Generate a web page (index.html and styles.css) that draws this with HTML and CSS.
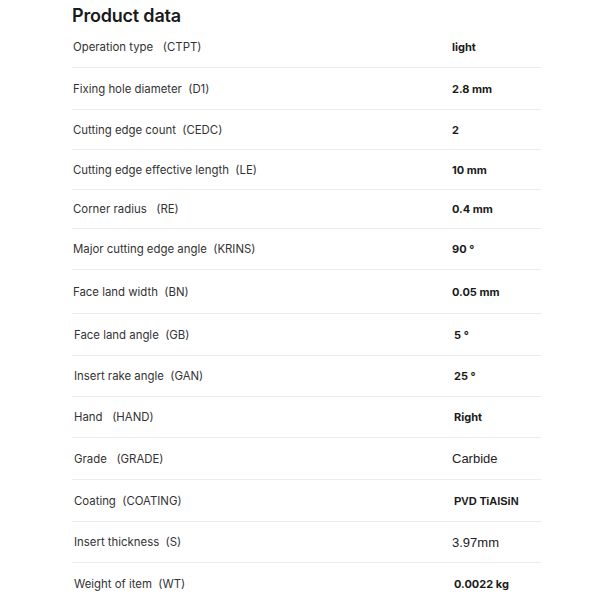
FILE: index.html
```html
<!DOCTYPE html>
<html lang="en">
<head>
    <meta charset="UTF-8">
    <meta name="viewport" content="width=device-width, initial-scale=1.0">
    <title>Product data</title>
    <link rel="stylesheet" href="styles.css">
</head>
<body>
    <div class="product-data">
        <h2 class="title">Product data</h2>

        <!-- 產品參數列表 -->
        <div class="row">
            <span class="label">Operation type   (CTPT)</span>
            <span class="value">light</span>
        </div>
        <div class="row row-long">
            <span class="label">Fixing hole diameter  (D1)</span>
            <span class="value">2.8 mm</span>
        </div>
        <div class="row row-short">
            <span class="label">Cutting edge count  (CEDC)</span>
            <span class="value">2</span>
        </div>
        <div class="row row-short">
            <span class="label">Cutting edge effective length  (LE)</span>
            <span class="value">10 mm</span>
        </div>
        <div class="row row-shorter">
            <span class="label">Corner radius   (RE)</span>
            <span class="value">0.4 mm</span>
        </div>
        <div class="row">
            <span class="label">Major cutting edge angle  (KRINS)</span>
            <span class="value">90 °</span>
        </div>
        <div class="row row-tall">
            <span class="label">Face land width  (BN)</span>
            <span class="value">0.05 mm</span>
        </div>
        <div class="row row-long">
            <span class="label shifted">Face land angle  (GB)</span>
            <span class="value shifted">5 °</span>
        </div>
        <div class="row">
            <span class="label shifted">Insert rake angle  (GAN)</span>
            <span class="value shifted">25 °</span>
        </div>
        <div class="row">
            <span class="label shifted">Hand   (HAND)</span>
            <span class="value shifted">Right</span>
        </div>
        <div class="row row-long">
            <span class="label shifted">Grade   (GRADE)</span>
            <span class="value value-plain">Carbide</span>
        </div>
        <div class="row row-long">
            <span class="label shifted">Coating  (COATING)</span>
            <span class="value value-arial shifted">PVD TiAlSiN</span>
        </div>
        <div class="row">
            <span class="label shifted">Insert thickness  (S)</span>
            <span class="value value-plain">3.97mm</span>
        </div>
        <div class="row row-last">
            <span class="label shifted">Weight of item  (WT)</span>
            <span class="value shifted">0.0022 kg</span>
        </div>
    </div>
</body>
</html>
```

FILE: styles.css
```css
/* 基本樣式 */
body {
    margin: 0;
    padding: 0;
    background-color: #fff;
    font-family: Inter, "Liberation Sans", sans-serif;
    color: #222;
}

.product-data {
    width: 469px;
    margin-left: 72px;
}

.title {
    margin: 0;
    padding-top: 5px;
    font-size: 18px;
    line-height: 22px;
    font-weight: 600;
    color: #1a1a1a;
    letter-spacing: -0.2px;
}

.row {
    display: grid;
    grid-template-columns: 380px 1fr;
    align-items: center;
    height: 41px;
    box-sizing: border-box;
    border-bottom: 1px solid #ececec;
}

.row-short {
    height: 40px;
}

.row-shorter {
    height: 39px;
}

.row-long {
    height: 42px;
}

.row-tall {
    height: 44px;
}

.row-last {
    border-bottom: none;
}

.label {
    padding-left: 1px;
    font-size: 11.4px;
    color: #333;
    white-space: pre;
}

.value {
    font-size: 11px;
    font-weight: 700;
    color: #1a1a1a;
}

.shifted {
    padding-left: 2px;
}

.value-plain {
    font-family: "Liberation Sans", Arial, sans-serif;
    font-size: 13px;
    font-weight: 400;
    color: #222;
}

.value-arial {
    font-family: "Liberation Sans", Arial, sans-serif;
}
```
